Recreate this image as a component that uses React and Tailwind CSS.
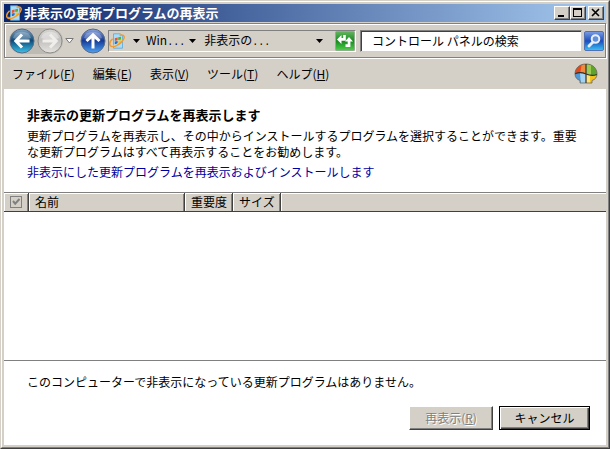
import { useState } from "react";

const menus = [
  { label: "ファイル", key: "F" },
  { label: "編集", key: "E" },
  { label: "表示", key: "V" },
  { label: "ツール", key: "T" },
  { label: "ヘルプ", key: "H" },
];

function UpdateIcon({ className }) {
  return (
    <svg viewBox="0 0 16 16" className={className} aria-hidden="true">
      <path d="M4.500 .8h7l2 2v12.400h-9z" fill="#a9dcf8" stroke="#5ba8da" strokeWidth="0.8" />
      <path d="M5.800 5.200 8.600 4.400v2.800l-2.800.7z" fill="#e8552d" />
      <path d="M9.200 4.300 12 3.700v2.800l-2.800.6z" fill="#5fae2c" />
      <path d="M5.800 8.600 8.600 7.900v2.800l-2.800.6z" fill="#2270cc" />
      <path d="M9.200 7.800 12 7.200V10l-2.800.6z" fill="#f7c325" />
      <path d="M10.500 2.300c5.200-1.500 6 2.200 2.600 6.200-3 3.500-8.100 6-10.800 4.800C-.5 12 .6 8.500 3.600 5.800" fill="none" stroke="#f29a2c" strokeWidth="1.5" />
      <path d="M2.200 12.200c2 .8 5-.6 7.500-2.400" fill="none" stroke="#fbd08a" strokeWidth="0.7" />
    </svg>
  );
}

function RoundArrow({ id, top, bottom, rim, rotate, faded }) {
  return (
    <svg viewBox="0 0 26 26" className="size-[26px] shrink-0" aria-hidden="true">
      <defs>
        <linearGradient id={id} x1="0" y1="0" x2="0" y2="1">
          <stop offset="0" stopColor={top} />
          <stop offset="0.48" stopColor={rim} />
          <stop offset="1" stopColor={bottom} />
        </linearGradient>
      </defs>
      <circle cx="13" cy="13" r="12" fill={`url(#${id})`} stroke={faded ? "#8f8e8b" : "#5a6a86"} />
      <path d="M4 10a9.3 8.5 0 0 1 18 0q-9 4-18 0z" fill="#fff" opacity={faded ? 0.35 : 0.25} />
      <path
        d="M20.500 13H7M13 6.500 6.800 13l6.200 6.500"
        transform={`rotate(${rotate} 13 13)`}
        fill="none"
        stroke={faded ? "#efeeec" : "#fff"}
        strokeWidth="3"
      />
    </svg>
  );
}

function Down({ className }) {
  return (
    <svg viewBox="0 0 7 4" className={className} aria-hidden="true">
      <path d="M0 0h7L3.5 4z" fill="currentColor" />
    </svg>
  );
}

function Dots() {
  return <span className="font-['Liberation_Mono',monospace] text-[10px]">...</span>;
}

function WindowButton({ label, children }) {
  return (
    <button
      type="button"
      aria-label={label}
      className="flex h-3.5 w-4 items-center justify-center border border-t-white border-r-[#404040] border-b-[#404040] border-l-white bg-[#d4d0c8] shadow-[inset_-1px_-1px_0_#808080]"
    >
      <svg viewBox="0 0 14 12" className="h-3 w-3.5 shrink-0" fill="none" stroke="#000" shapeRendering="crispEdges">
        {children}
      </svg>
    </button>
  );
}

function TitleBar() {
  return (
    <header className="flex h-[18px] items-center bg-linear-to-r/srgb from-[#0a246a] to-[#a6caf0] pr-0.5 pl-0.5">
      <UpdateIcon className="size-4 shrink-0" />
      <h1 className="ml-0.5 flex-1 truncate text-[13px] leading-[18px] font-bold text-white">非表示の更新プログラムの再表示</h1>
      <WindowButton label="最小化">
        <path d="M3 9h6" strokeWidth="2" />
      </WindowButton>
      <WindowButton label="最大化">
        <path d="M2 2h9" strokeWidth="2" />
        <path d="M2.5 2v7.5h8V2" />
      </WindowButton>
      <span className="w-0.5" />
      <WindowButton label="閉じる">
        <path d="M3 2l7 7M10 2l-7 7" strokeWidth="1.6" shapeRendering="auto" />
      </WindowButton>
    </header>
  );
}

function Toolbar() {
  const [query, setQuery] = useState("コントロール パネルの検索");

  return (
    <div className="mt-px flex h-[35px] items-center border border-[#808080] pr-px pl-1 shadow-[inset_1px_1px_0_#fff,1px_1px_0_#fff]">
      <div className="flex items-center rounded-full bg-[#bebbb4]">
        <button type="button" aria-label="戻る">
          <RoundArrow id="back" top="#86a6c4" rim="#0f4a78" bottom="#38c4ec" rotate={0} />
        </button>
        <button type="button" aria-label="進む" disabled className="ml-0.5">
          <RoundArrow id="forward" top="#d6d4d0" rim="#c2c0bc" bottom="#e6e4e0" rotate={180} faded />
        </button>
      </div>
      <button type="button" aria-label="履歴" className="ml-0.5">
        <svg viewBox="0 0 9 6" className="h-1.5 w-[9px]">
          <path d="M.8.5h7.4L4.5 5z" fill="#fff" stroke="#777" />
        </svg>
      </button>
      <button type="button" aria-label="上へ" className="ml-1.5">
        <RoundArrow id="up" top="#8ba6dd" rim="#163a96" bottom="#4ba4f4" rotate={90} />
      </button>
      <nav
        aria-label="アドレス"
        className="ml-0.5 flex h-[22px] w-[248px] items-center border border-t-[#808080] border-r-white border-b-white border-l-[#808080] text-xs"
      >
        <UpdateIcon className="size-4 shrink-0" />
        <Down className="ml-2 h-1 w-[7px]" />
        <a href="#win" className="ml-1.5">
          Win
          <Dots />
        </a>
        <Down className="ml-1 h-1 w-[7px]" />
        <a href="#hidden" className="ml-2">
          非表示の
          <Dots />
        </a>
        <Down className="mr-3 ml-auto h-1 w-[7px]" />
        <button type="button" aria-label="最新の情報に更新">
          <svg viewBox="0 0 20 20" className="size-5">
            <defs>
              <linearGradient id="refresh" x1="0" y1="0" x2="0" y2="1">
                <stop offset="0" stopColor="#63b55f" />
                <stop offset="0.5" stopColor="#178a1f" />
                <stop offset="1" stopColor="#4fd04b" />
              </linearGradient>
            </defs>
            <rect x=".5" y=".5" width="19" height="19" rx="1" fill="url(#refresh)" stroke="#8fae8c" />
            <path d="M2 8.500 6.500 4v3h1.700V4h2.600v5.800H6.500V13z" fill="#fff" />
            <path d="M18 10.500 14 6l-4 4.500h2.700v2.800H10.500V16h4.900v-5.500z" fill="#fff" />
          </svg>
        </button>
      </nav>
      <input
        type="text"
        aria-label="検索"
        value={query}
        onChange={(e) => setQuery(e.target.value)}
        className="ml-1 h-[22px] min-w-0 flex-1 border border-t-[#808080] border-r-[#d4d0c8] border-b-[#d4d0c8] border-l-[#808080] bg-white px-[11px] text-xs shadow-[inset_1px_1px_0_#404040] outline-none"
      />
      <button type="button" aria-label="検索する" className="ml-0.5">
        <svg viewBox="0 0 20 20" className="size-5">
          <defs>
            <linearGradient id="find" x1="0" y1="0" x2="0" y2="1">
              <stop offset="0" stopColor="#7a9fe6" />
              <stop offset="0.5" stopColor="#1b4dbc" />
              <stop offset="1" stopColor="#3ac4f5" />
            </linearGradient>
          </defs>
          <rect x=".5" y=".5" width="19" height="19" rx="1.5" fill="url(#find)" stroke="#5470b4" />
          <path d="M9 11l-4 4" stroke="#e8eefa" strokeWidth="3" strokeLinecap="round" />
          <circle cx="11.5" cy="8" r="3.8" fill="#5f90dc" stroke="#e8eefa" strokeWidth="2" />
        </svg>
      </button>
    </div>
  );
}

function WindowsFlag() {
  return (
    <svg viewBox="0 0 24 22" className="h-[22px] w-6" aria-hidden="true">
      <defs>
        <clipPath id="dome">
          <path d="M12 1C5 1 1 5.500 1 11c0 3.500 2 5.500 5 6.500V20h12v-2.500c3-1 5-3 5-6.500C23 5.500 19 1 12 1z" />
        </clipPath>
      </defs>
      <g clipPath="url(#dome)">
        <path d="M0 0h12v11H0z" fill="#e2491c" />
        <path d="M8 0h4v11H6z" fill="#f08a3c" />
        <path d="M12 0h12v12H12z" fill="#5ea32c" />
        <path d="M12 0h5v12h-5z" fill="#9acb52" />
        <path d="M0 10.500Q6 8.500 12 11v11H0z" fill="#4f9ad6" />
        <path d="M6 10q3 0 6 1v11H7z" fill="#a5d2f0" />
        <path d="M12 11q6 2.500 12 .5V22H12z" fill="#f4c220" />
        <path d="M12 11q2 1 4 1.300V22h-4z" fill="#fbe27a" />
      </g>
      <path
        d="M12 1C5 1 1 5.500 1 11c0 3.500 2 5.500 5 6.500V20h12v-2.500c3-1 5-3 5-6.500C23 5.500 19 1 12 1z"
        fill="none"
        stroke="#6b6557"
        strokeWidth="0.8"
      />
      <path d="M12 1v19M1.200 10.800Q6 8.500 12 11t10.800.5" fill="none" stroke="#33302a" strokeWidth="1.2" />
    </svg>
  );
}

function MenuBar() {
  return (
    <nav aria-label="メニュー" className="mt-px flex h-[30px] items-center pr-2 pl-2">
      <div className="flex flex-1 gap-[18px]">
        {menus.map((menu) => (
          <button key={menu.key} type="button" className="text-xs">
            {menu.label}(<u>{menu.key}</u>)
          </button>
        ))}
      </div>
      <WindowsFlag />
    </nav>
  );
}

const headCell = "border-r border-[#404040] p-0 pl-1.5 text-left font-normal shadow-[inset_1px_1px_0_#fff,inset_-1px_0_0_#808080]";

function UpdateList() {
  return (
    <section className="flex-1 border-t border-b border-[#808080]">
      <table className="w-full table-fixed border-separate border-spacing-0 border-b border-[#404040] bg-[#d4d0c8] text-xs leading-[18px]">
        <thead>
          <tr className="h-[18px]">
            <th className="w-[25px] border-r border-[#404040] p-0 shadow-[inset_1px_1px_0_#fff,inset_-1px_0_0_#808080]">
              <label className="relative mx-auto block size-3">
                <input
                  type="checkbox"
                  aria-label="すべて選択"
                  defaultChecked
                  disabled
                  className="block size-3 appearance-none border border-[#808080]"
                />
                <svg viewBox="0 0 12 12" className="absolute inset-0 size-3" fill="none" stroke="#808080" strokeWidth="2">
                  <path d="m3 5 2.200 2.700L9.500 3" />
                </svg>
              </label>
            </th>
            <th className={`w-[156px] ${headCell}`}>名前</th>
            <th className={`w-12 ${headCell}`}>重要度</th>
            <th className={`w-12 ${headCell}`}>サイズ</th>
            <td className="p-0 shadow-[inset_1px_1px_0_#fff]" />
          </tr>
        </thead>
      </table>
    </section>
  );
}

const pushButton = "h-6 border bg-[#d4d0c8] text-xs";

export default function App() {
  return (
    <div className="flex min-h-screen flex-col border border-t-[#d4d0c8] border-r-[#404040] border-b-[#404040] border-l-[#d4d0c8] bg-[#d4d0c8] font-['Noto_Sans_CJK_JP',sans-serif] text-black">
      <div className="flex flex-1 flex-col border border-t-white border-r-[#808080] border-b-[#808080] border-l-white p-0.5">
        <TitleBar />
        <Toolbar />
        <MenuBar />
        <main className="flex flex-1 flex-col bg-white">
          <div className="px-[23px] pt-[17px] pb-3 text-xs">
            <h2 className="text-[13px] leading-[18px] font-bold">非表示の更新プログラムを再表示します</h2>
            <p className="mt-1 leading-4">
              更新プログラムを再表示し、その中からインストールするプログラムを選択することができます。重要な更新プログラムはすべて再表示することをお勧めします。
            </p>
            <a href="#restore" className="mt-1 block leading-4 text-[#00009c]">
              非表示にした更新プログラムを再表示およびインストールします
            </a>
          </div>
          <UpdateList />
          <footer className="px-4 pt-3 pb-[15px] text-xs">
            <p className="pl-[7px] leading-[18px]">このコンピューターで非表示になっている更新プログラムはありません。</p>
            <div className="mt-[15px] flex justify-end gap-1.5">
              <button
                type="button"
                disabled
                className={`${pushButton} w-[84px] border-t-white border-r-[#404040] border-b-[#404040] border-l-white text-[#808080] shadow-[inset_-1px_-1px_0_#808080] [text-shadow:1px_1px_0_#fff]`}
              >
                再表示(<u>R</u>)
              </button>
              <button
                type="button"
                className={`${pushButton} w-[91px] border-black shadow-[inset_1px_1px_0_#fff,inset_-1px_-1px_0_#404040,inset_-2px_-2px_0_#808080]`}
              >
                キャンセル
              </button>
            </div>
          </footer>
        </main>
      </div>
    </div>
  );
}
